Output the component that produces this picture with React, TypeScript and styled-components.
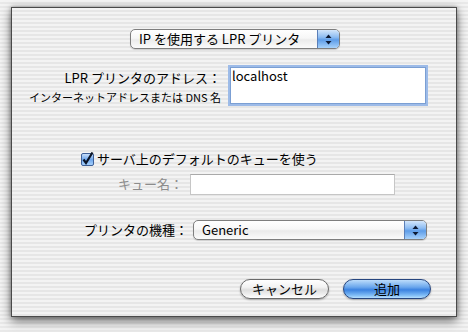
import React from 'react';
import styled, { createGlobalStyle } from 'styled-components';

const GlobalStyle = createGlobalStyle`
  html, body {
    margin: 0;
    padding: 0;
    background: #f2f2f2;
  }
  * {
    box-sizing: border-box;
  }
`;

const Screen = styled.div`
  width: 468px;
  height: 332px;
  padding: 7px 0 0 11px;
  background: repeating-linear-gradient(to bottom, #f4f4f4 0 2px, #e9e9e9 2px 4px);
  font-family: "Noto Sans CJK JP", "Noto Sans", sans-serif;
  color: #000;
  overflow: hidden;
`;

const Sheet = styled.div`
  width: 446px;
  height: 310px;
  border: 1px solid #4a4a4a;
  background: repeating-linear-gradient(to bottom, #f3f3f3 0 2px, #e6e6e6 2px 4px);
  box-shadow: 0 4px 10px rgba(0, 0, 0, 0.55), 0 0 4px rgba(0, 0, 0, 0.3);
  display: flex;
  flex-direction: column;
  padding-top: 21px;
`;

const CenterRow = styled.div`
  display: flex;
  justify-content: center;
  padding-left: 2px;
`;

const Row = styled.div<{ $top: number; $gap: number }>`
  display: flex;
  align-items: flex-start;
  margin-top: ${(p) => p.$top}px;
  gap: ${(p) => p.$gap}px;
`;

const LabelCol = styled.div<{ $width: number }>`
  width: ${(p) => p.$width}px;
  display: flex;
  flex-direction: column;
  align-items: flex-end;
  flex-shrink: 0;
`;

const Label = styled.span<{ $muted?: boolean }>`
  font-size: 13px;
  line-height: 20px;
  white-space: nowrap;
  color: ${(p) => (p.$muted ? '#8c8c8c' : '#000')};
`;

const SubLabel = styled.span`
  font-size: 11px;
  line-height: 14px;
  margin-top: 2px;
  white-space: nowrap;
`;

const AddressLabels = styled(LabelCol)`
  padding-top: 3px;
`;

const FocusField = styled.div`
  width: 200px;
  height: 41px;
  border: 3px solid #9dbbe8;
  outline: 1px solid #7b9fd3;
  outline-offset: -3px;
  background: #fff;
  font-size: 13px;
  line-height: 16px;
  padding: 0 0 0 1px;
`;

const PlainField = styled.div`
  width: 205px;
  height: 21px;
  background: #fff;
  border: 1px solid #c6c6c6;
  border-top-color: #a9a9a9;
`;

const Popup = styled.div<{ $width: number }>`
  width: ${(p) => p.$width}px;
  height: 20px;
  border: 1px solid #7e7e7e;
  border-radius: 5px;
  background: linear-gradient(to bottom, #ffffff 0%, #f7f7f7 45%, #ebebeb 55%, #fbfbfb 100%);
  box-shadow: 0 1px 1px rgba(0, 0, 0, 0.15);
  display: flex;
  overflow: hidden;
`;

const PopupValue = styled.span`
  flex: 1;
  font-size: 13px;
  line-height: 18px;
  padding-left: 8px;
  white-space: nowrap;
`;

const PopupArrows = styled.div`
  width: 22px;
  border-left: 1px solid #5b7fb8;
  background: linear-gradient(to bottom, #d3e6fb 0%, #8dbcf2 40%, #5e9de8 55%, #a8d2fb 100%);
  display: flex;
  align-items: center;
  justify-content: center;
`;

const CheckRow = styled.div`
  display: flex;
  align-items: center;
  gap: 3px;
  margin-top: 44px;
  padding-left: 69px;
`;

const CheckLabel = styled.span`
  font-size: 13px;
  line-height: 18px;
  white-space: nowrap;
`;

const ButtonRow = styled.div`
  display: flex;
  justify-content: flex-end;
  gap: 14px;
  margin-top: 39px;
  padding-right: 25px;
`;

const AquaButton = styled.button<{ $primary?: boolean }>`
  width: ${(p) => (p.$primary ? 88 : 89)}px;
  height: 20px;
  border-radius: 10px;
  border: 1px solid ${(p) => (p.$primary ? '#27467f' : '#6a6a6a')};
  background: ${(p) =>
    p.$primary
      ? 'linear-gradient(to bottom, #bcdcfb 0%, #6aa6ec 40%, #3b82e0 55%, #7fbcf6 85%, #b6e0ff 100%)'
      : 'linear-gradient(to bottom, #ffffff 0%, #f2f2f2 40%, #dedede 55%, #f3f3f3 85%, #ffffff 100%)'};
  box-shadow: 0 1px 2px rgba(0, 0, 0, 0.3);
  font-family: "Noto Sans CJK JP", "Noto Sans", sans-serif;
  font-size: 13px;
  line-height: 16px;
  color: #000;
  padding: 0;
`;

const PopupArrowIcon: React.FC = () => (
  <svg width="7" height="11" viewBox="0 0 7 11">
    <path d="M3.5 0.5 L6.5 4 L0.5 4 Z" fill="#0d1a33" />
    <path d="M3.5 10.5 L6.5 7 L0.5 7 Z" fill="#0d1a33" />
  </svg>
);

const CheckBoxIcon: React.FC = () => (
  <svg width="13" height="14" viewBox="0 0 13 14">
    <defs>
      <linearGradient id="cb" x1="0" y1="0" x2="0" y2="1">
        <stop offset="0" stopColor="#cfe3fb" />
        <stop offset="0.5" stopColor="#6ea6ec" />
        <stop offset="1" stopColor="#a9d3fc" />
      </linearGradient>
    </defs>
    <rect x="0.5" y="1.5" width="12" height="12" rx="1.5" fill="url(#cb)" stroke="#3d5f97" />
    <path d="M2.5 7.5 L5 11 L11.5 0.5" fill="none" stroke="#0b1426" strokeWidth="2.2" />
  </svg>
);

interface PopupButtonProps {
  value: string;
  width: number;
}

const PopupButton: React.FC<PopupButtonProps> = ({ value, width }) => (
  <Popup $width={width}>
    <PopupValue>{value}</PopupValue>
    <PopupArrows>
      <PopupArrowIcon />
    </PopupArrows>
  </Popup>
);

export default function App() {
  return (
    <>
      <GlobalStyle />
      <Screen>
        <Sheet>
          <CenterRow>
            <PopupButton value="IP を使用する LPR プリンタ" width={210} />
          </CenterRow>

          <Row $top={16} $gap={7}>
            <AddressLabels $width={209}>
              <Label>LPR プリンタのアドレス：</Label>
              <SubLabel>インターネットアドレスまたは DNS 名</SubLabel>
            </AddressLabels>
            <FocusField>localhost</FocusField>
          </Row>

          <CheckRow>
            <CheckBoxIcon />
            <CheckLabel>サーバ上のデフォルトのキューを使う</CheckLabel>
          </CheckRow>

          <Row $top={6} $gap={7}>
            <LabelCol $width={171}>
              <Label $muted>キュー名：</Label>
            </LabelCol>
            <PlainField />
          </Row>

          <Row $top={25} $gap={5}>
            <LabelCol $width={176}>
              <Label>プリンタの機種：</Label>
            </LabelCol>
            <PopupButton value="Generic" width={234} />
          </Row>

          <ButtonRow>
            <AquaButton>キャンセル</AquaButton>
            <AquaButton $primary>追加</AquaButton>
          </ButtonRow>
        </Sheet>
      </Screen>
    </>
  );
}
